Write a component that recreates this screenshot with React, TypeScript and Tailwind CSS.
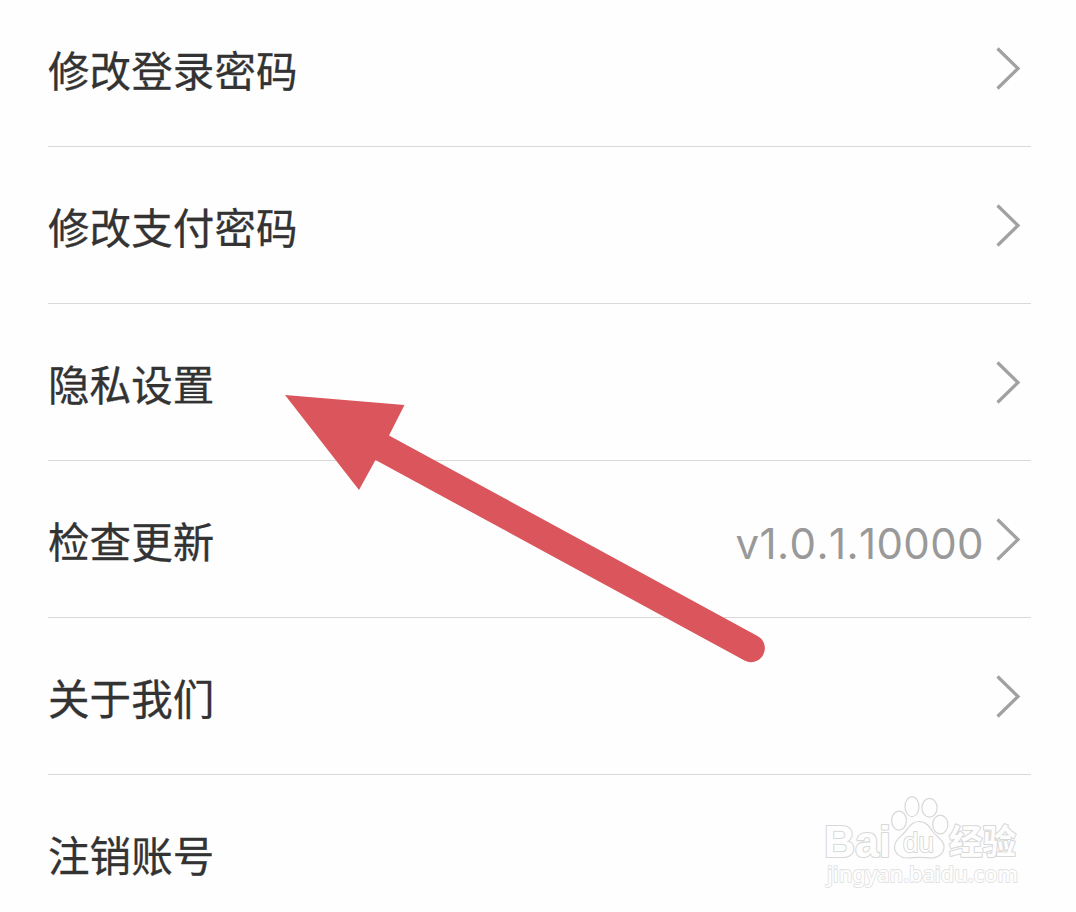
import React from 'react';

interface SettingsItem {
  label: string;
  value?: string;
  hideChevron?: boolean;
}

const items: SettingsItem[] = [
  { label: '修改登录密码' },
  { label: '修改支付密码' },
  { label: '隐私设置' },
  { label: '检查更新', value: 'v1.0.1.10000' },
  { label: '关于我们' },
  { label: '注销账号', hideChevron: true },
];

const Chevron: React.FC = () => (
  <svg className="mb-[3px] h-[46px] w-[28px] shrink-0" viewBox="0 0 28 46" fill="none">
    <path d="M3.5 2.5 24 22.5 3.5 42.5" stroke="#a1a1a1" strokeWidth="3.2" />
  </svg>
);

const SettingsRow: React.FC<SettingsItem> = ({ label, value, hideChevron }) => (
  <li className="flex h-[157px] shrink-0 items-center border-b border-[#d9d9d9] pt-1 pr-[9px]">
    <span className="mb-[2px] flex-1 text-[41.5px] leading-[60px] tracking-[0.1px] text-[#333333] [-webkit-text-stroke:0.3px_#333333]">
      {label}
    </span>
    {value && (
      <span className="mr-[10px] mb-[-6px] font-['Inter',sans-serif] text-[42px] leading-[60px] tracking-[0.4px] text-[#999999] [font-feature-settings:'calt'_0] [font-kerning:none]">
        {value}
      </span>
    )}
    {!hideChevron && <Chevron />}
  </li>
);

const PointerArrow: React.FC = () => (
  <svg className="pointer-events-none absolute top-[385px] left-[275px] h-[290px] w-[500px]" viewBox="275 385 500 290">
    <path
      d="M285 395 404.5 405 389 435.5 757.5 636A13.7 13.7 0 0 1 744.5 660.500L375.5 460 359 490Z"
      fill="#da565c"
    />
  </svg>
);

const Watermark: React.FC = () => (
  <svg
    className="pointer-events-none absolute top-[790px] left-[816px] h-[110px] w-[212px]"
    viewBox="816 790 212 110"
    fill="#fefefe"
    stroke="#d8d8d8"
    strokeWidth="1.2"
    strokeLinejoin="round"
  >
    <g fontWeight="700" paintOrder="stroke" strokeWidth="2.2">
      <text
        x="824"
        y="856.5"
        fontSize="44"
        fontFamily="'Liberation Sans', sans-serif"
        textLength="67"
        lengthAdjust="spacingAndGlyphs"
      >
        Bai
      </text>
      <text
        x="949"
        y="854"
        fontSize="34"
        fontFamily="'Noto Sans CJK SC', sans-serif"
        textLength="67"
        lengthAdjust="spacingAndGlyphs"
      >
        经验
      </text>
    </g>
    <ellipse cx="899" cy="820.7" rx="7.4" ry="9.5" />
    <ellipse cx="912" cy="806.7" rx="7" ry="10" />
    <ellipse cx="929.5" cy="807.8" rx="7.6" ry="9.4" />
    <ellipse cx="940.3" cy="824.5" rx="7.6" ry="9.4" />
    <path d="M919 821.5C912 821.5 909 827 905 832 901 836.5 894.5 840 894.5 847 894.5 854 901 858 907 858 912 858 915 857.3 919 857.3 924 857.3 928 858.3 933 858 940 857 944.5 852 944 846 943.5 840 937 837 933 832 929 826 926 821.5 919 821.5Z" />
    <text
      x="903"
      y="851.5"
      fontFamily="'Liberation Sans', sans-serif"
      fontSize="27"
      strokeWidth="1.8"
      paintOrder="stroke"
      textLength="31"
      lengthAdjust="spacingAndGlyphs"
    >
      du
    </text>
    <text
      x="827"
      y="882"
      fontFamily="'Noto Sans', sans-serif"
      fontSize="22"
      fontWeight="500"
      stroke="#e2e2e2"
      strokeWidth="1.8"
      paintOrder="stroke"
      textLength="191"
      lengthAdjust="spacingAndGlyphs"
    >
      jingyan.baidu.com
    </text>
  </svg>
);

export default function App() {
  return (
    <main className="relative h-[912px] w-[1076px] overflow-hidden bg-[#fefefe] font-['Noto_Sans_CJK_SC',sans-serif]">
      <ul className="-mt-[10px] mr-[45px] ml-12 flex flex-col">
        {items.map((item) => (
          <SettingsRow key={item.label} {...item} />
        ))}
      </ul>
      <PointerArrow />
      <Watermark />
    </main>
  );
}
